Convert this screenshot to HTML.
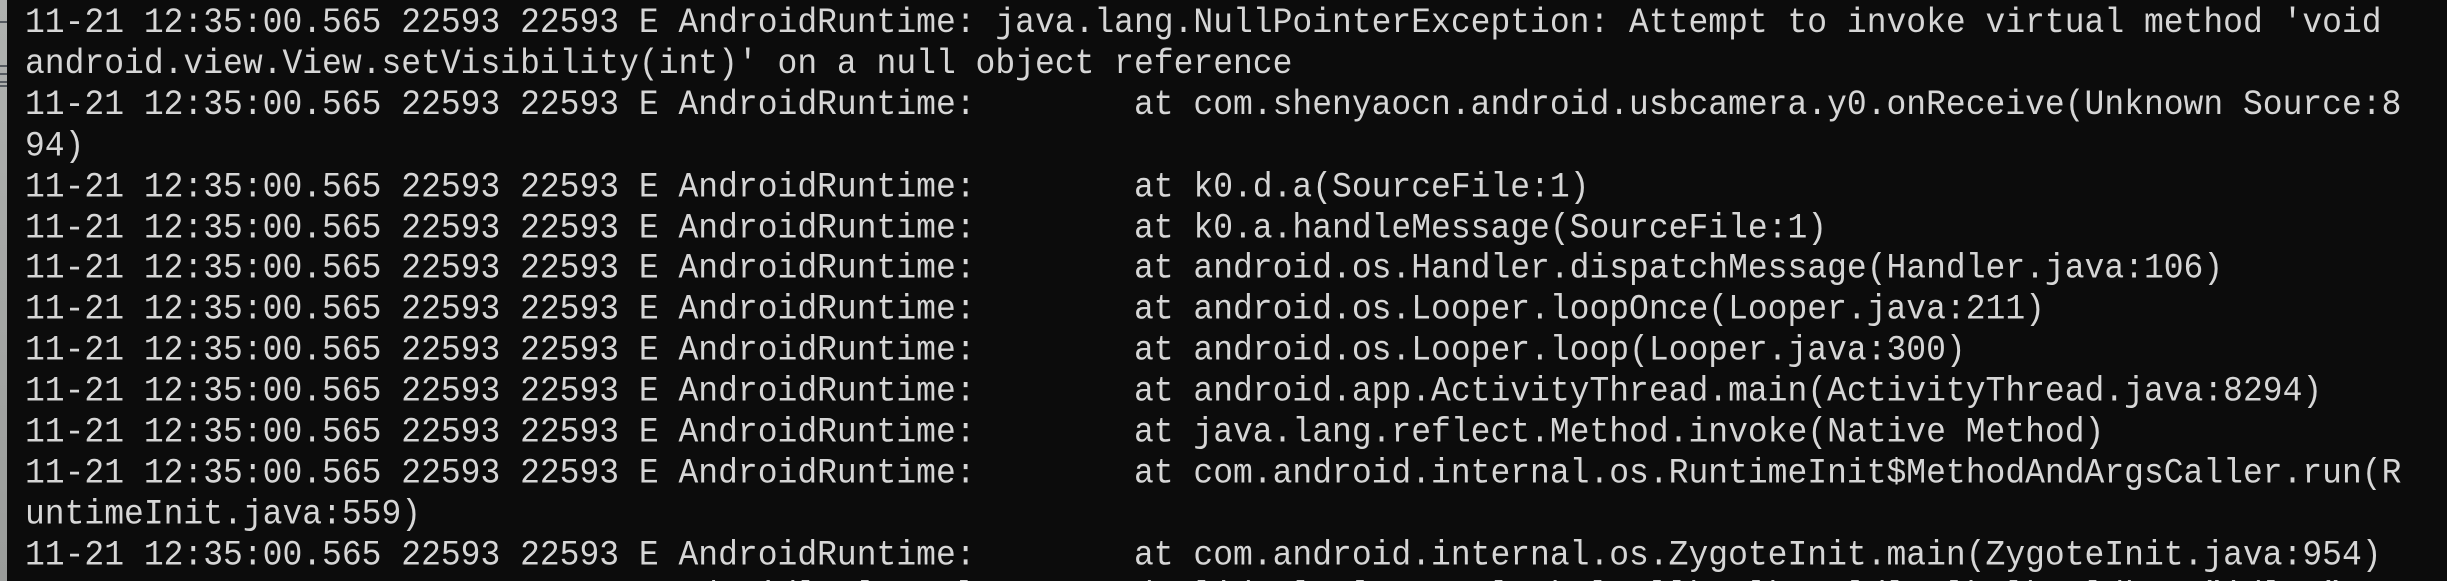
<!DOCTYPE html>
<html><head><meta charset="utf-8"><style>
html,body{margin:0;padding:0;width:2447px;height:581px;overflow:hidden;background:#0c0c0c;}
.wrap{position:absolute;left:0;top:0;width:2447px;height:581px;overflow:hidden;}
.strip{position:absolute;left:0;top:0;width:7px;height:581px;background:linear-gradient(#b0b2b0,#9a9c9a);}
.strip i{position:absolute;left:0;width:7px;height:2px;background:#555a60;}
pre{position:absolute;left:25px;top:3px;margin:0;font-family:"Liberation Mono",monospace;font-size:33px;line-height:37.9px;color:#d6d6d6;transform:scaleY(1.08);transform-origin:0 0;}
</style></head><body><div class="wrap">
<div class="strip"><i style="top:21px"></i><i style="top:65px"></i><i style="top:73px"></i><i style="top:81px"></i><i style="top:85px"></i></div>
<pre>11-21 12:35:00.565 22593 22593 E AndroidRuntime: java.lang.NullPointerException: Attempt to invoke virtual method 'void
android.view.View.setVisibility(int)' on a null object reference
11-21 12:35:00.565 22593 22593 E AndroidRuntime:        at com.shenyaocn.android.usbcamera.y0.onReceive(Unknown Source:8
94)
11-21 12:35:00.565 22593 22593 E AndroidRuntime:        at k0.d.a(SourceFile:1)
11-21 12:35:00.565 22593 22593 E AndroidRuntime:        at k0.a.handleMessage(SourceFile:1)
11-21 12:35:00.565 22593 22593 E AndroidRuntime:        at android.os.Handler.dispatchMessage(Handler.java:106)
11-21 12:35:00.565 22593 22593 E AndroidRuntime:        at android.os.Looper.loopOnce(Looper.java:211)
11-21 12:35:00.565 22593 22593 E AndroidRuntime:        at android.os.Looper.loop(Looper.java:300)
11-21 12:35:00.565 22593 22593 E AndroidRuntime:        at android.app.ActivityThread.main(ActivityThread.java:8294)
11-21 12:35:00.565 22593 22593 E AndroidRuntime:        at java.lang.reflect.Method.invoke(Native Method)
11-21 12:35:00.565 22593 22593 E AndroidRuntime:        at com.android.internal.os.RuntimeInit$MethodAndArgsCaller.run(R
untimeInit.java:559)
11-21 12:35:00.565 22593 22593 E AndroidRuntime:        at com.android.internal.os.ZygoteInit.main(ZygoteInit.java:954)
                                  d  idl  l    l        d  lid  l  l      l  k l  llk  lk   ldl  lk lk  ldk   "idl  "</pre>
</div></body></html>
